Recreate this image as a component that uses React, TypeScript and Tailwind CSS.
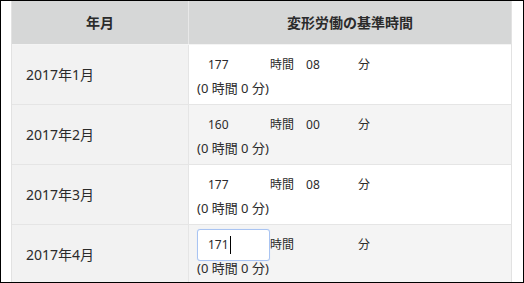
import React from "react";

type Row = { label: string; h: string; m: string; focus?: boolean };

const rows: Row[] = [
  { label: "2017年1月", h: "177", m: "08" },
  { label: "2017年2月", h: "160", m: "00" },
  { label: "2017年3月", h: "177", m: "08" },
  { label: "2017年4月", h: "171", m: "", focus: true },
];

export default function App() {
  return (
    <div
      className="w-[524px] h-[283px] border border-black bg-white pl-[10px] overflow-hidden text-[#2b2b2b]"
      style={{ fontFamily: '"Noto Sans", "Noto Sans CJK JP", sans-serif' }}
    >
      <div className="w-[501px] border-l border-r border-[#e2e2e2]">
        <div className="grid grid-cols-[177px_1fr] h-[43px] bg-[#d6d7d7] border-b border-[#f4f4f4] box-content">
          <div className="flex items-center justify-center border-r border-[#e8e8e8] text-[14px] font-bold">
            年月
          </div>
          <div className="flex items-center justify-center text-[14px] font-bold">
            変形労働の基準時間
          </div>
        </div>
        {rows.map((r, i) => (
          <div
            key={i}
            className="grid grid-cols-[177px_1fr] h-[59px] border-b border-[#e5e5e5] box-content"
          >
            <div className="flex items-center pl-[14px] bg-[#f2f2f2] border-r border-[#e5e5e5] text-[14px]">
              {r.label}
            </div>
            <div
              className={
                i % 2 === 1
                  ? "bg-[#f4f4f4] pl-[8px] pt-[4px]"
                  : "bg-white pl-[8px] pt-[4px]"
              }
            >
              <div className="flex items-center h-[32px] text-[12px]">
                <div
                  className={
                    r.focus
                      ? "w-[73px] h-[32px] pl-[10px] flex items-center rounded-[3px] border border-[#a9c4f2] bg-white shadow-[0_0_1px_#c6d9f8]"
                      : "w-[73px] h-[32px] pl-[10px] flex items-center border border-transparent"
                  }
                >
                  <span>{r.h}</span>
                  {r.focus && <span className="inline-block w-[1px] h-[18px] bg-black ml-[1px]" />}
                </div>
                <span>時間</span>
                <div className="ml-[2px] w-[62px] h-[32px] pl-[10px] flex items-center">
                  {r.m}
                </div>
                <span>分</span>
              </div>
              <div className="text-[13px] leading-[15px]">(0 時間 0 分)</div>
            </div>
          </div>
        ))}
      </div>
    </div>
  );
}
